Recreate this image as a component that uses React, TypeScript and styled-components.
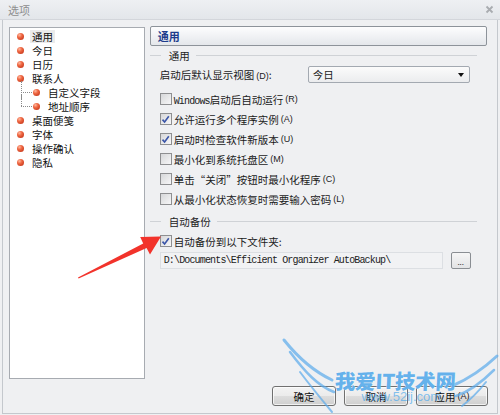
import React from 'react';
import styled, { createGlobalStyle } from 'styled-components';

const Global = createGlobalStyle`
  html, body { margin: 0; padding: 0; width: 500px; height: 415px; overflow: hidden; background: #eff0f2; }
  body { font-family: "Noto Sans CJK SC", "Liberation Sans", sans-serif; font-size: 10.5px; color: #1a1a1a; }
  * { box-sizing: border-box; }
`;

const Window = styled.div`
  position: relative;
  width: 500px;
  height: 415px;
  display: flex;
  flex-direction: column;
  background: #eff0f2;
  overflow: hidden;
`;

const TitleBar = styled.div`
  height: 20px;
  flex: none;
  display: flex;
  align-items: center;
  justify-content: space-between;
  padding: 0 6px 0 8px;
  background: linear-gradient(#eef0f3, #e3e6ea);
  border-bottom: 1px solid #d3d6db;
  color: #8e8e8e;
  font-size: 11px;
`;

const Frame = styled.div`
  flex: 1;
  display: flex;
  flex-direction: column;
  margin: 0 2px 1px 2px;
  border: 1px solid #c4c8cd;
  border-top: none;
  padding: 6px 10px 7px 6px;
`;

const Body = styled.div`
  flex: 1;
  display: flex;
  gap: 5px;
`;

const Tree = styled.div`
  width: 136px;
  margin-top: 1px;
  background: #fff;
  border: 1px solid #a7abb1;
  padding-top: 1px;
  display: flex;
  flex-direction: column;
`;

const TreeRow = styled.div<{ $sub?: boolean; $last?: boolean }>`
  position: relative;
  height: 14px;
  display: flex;
  align-items: center;
  padding-left: ${p => (p.$sub ? 23 : 7)}px;
  ${p =>
    p.$sub
      ? `&::before {
          content: '';
          position: absolute;
          left: 11px;
          top: -4px;
          width: 11px;
          height: ${p.$last ? 11 : 18}px;
          border-left: 1px dotted #8a8a8a;
        }
        &::after {
          content: '';
          position: absolute;
          left: 11px;
          top: 7px;
          width: 11px;
          border-top: 1px dotted #8a8a8a;
        }`
      : ''}
`;

const Bullet = styled.span`
  width: 7px;
  height: 7px;
  border-radius: 50%;
  flex: none;
  background: radial-gradient(circle at 35% 30%, #ffb9a0 0%, #f06a45 35%, #c93a1c 80%, #a42b12 100%);
  margin-right: 8px;
`;

const TreeText = styled.span<{ $selected?: boolean }>`
  line-height: 13px;
  padding: 0 2px;
  margin-left: -2px;
  background: ${p => (p.$selected ? '#ebebeb' : 'transparent')};
  color: #111;
`;

const Panel = styled.div`
  width: 338px;
  display: flex;
  flex-direction: column;
`;

const Header = styled.div`
  height: 20px;
  border: 1px solid #8d939a;
  border-radius: 2px;
  background: linear-gradient(#fdfdfe, #e4e7eb);
  display: flex;
  align-items: center;
  padding-left: 7px;
  font-weight: bold;
  color: #1d3c8c;
  font-size: 11px;
`;

const GroupLabel = styled.div<{ $top: number }>`
  margin-top: ${p => p.$top}px;
  height: 13px;
  display: flex;
  align-items: center;
  margin-right: 10px;
  color: #222;
  &::before {
    content: '';
    width: 11px;
    border-top: 1px solid #cfd2d6;
    margin-right: 8px;
  }
  &::after {
    content: '';
    flex: 1;
    border-top: 1px solid #cfd2d6;
    margin-left: 6px;
  }
`;

const Content = styled.div`
  padding-left: 10px;
  display: flex;
  flex-direction: column;
`;

const ComboRow = styled.div`
  margin-top: 4px;
  height: 17px;
  display: grid;
  grid-template-columns: 148px 162px;
  align-items: center;
`;

const Combo = styled.div`
  height: 17px;
  border: 1px solid #a3a9b1;
  border-radius: 2px;
  background: linear-gradient(#fbfbfb, #ebecee);
  display: flex;
  align-items: center;
  justify-content: space-between;
  padding: 0 5px 0 4px;
`;

const Caret = styled.span`
  width: 0;
  height: 0;
  border-left: 3.5px solid transparent;
  border-right: 3.5px solid transparent;
  border-top: 4px solid #111;
`;

const Key = styled.span`
  font-family: "Liberation Sans", sans-serif;
  font-size: 9px;
  margin-left: 2px;
  color: #222;
`;

const Mono = styled.span`
  font-family: "Liberation Mono", monospace;
  font-size: 10px;
  letter-spacing: -0.85px;
  color: #222;
`;

const CheckList = styled.div`
  margin-top: 6px;
  display: flex;
  flex-direction: column;
`;

const CheckRow = styled.div<{ $h?: number; $top?: number }>`
  height: ${p => p.$h ?? 20}px;
  margin-top: ${p => p.$top ?? 0}px;
  display: flex;
  align-items: center;
`;

const Box = styled.span`
  width: 12px;
  height: 12px;
  flex: none;
  border: 1px solid #8e8f91;
  background: linear-gradient(135deg, #d6d7d9, #f7f7f8);
  margin-right: 2px;
  display: flex;
  align-items: center;
  justify-content: center;
`;

const PathRow = styled.div`
  margin-top: 2px;
  height: 17px;
  display: flex;
  gap: 8px;
`;

const PathBox = styled.div`
  width: 283px;
  height: 17px;
  border: 1px solid #dcdfe3;
  background: #f1f2f4;
  display: flex;
  align-items: center;
  padding-left: 3px;
`;

const SmallButton = styled.div`
  width: 20px;
  height: 17px;
  border: 1px solid #8a8e93;
  border-radius: 2px;
  background: linear-gradient(#f6f6f6, #e2e3e5);
  display: flex;
  align-items: flex-end;
  justify-content: center;
  padding-bottom: 2px;
  font-size: 8px;
  line-height: 8px;
  color: #333;
`;

const Footer = styled.div`
  margin-top: 7px;
  height: 20px;
  display: flex;
  justify-content: flex-end;
  gap: 8px;
  margin-right: -1px;
`;

const Button = styled.div<{ $w: number }>`
  width: ${p => p.$w}px;
  height: 20px;
  border: 1px solid #707070;
  border-radius: 3px;
  background: linear-gradient(#f3f3f3 0%, #ebebeb 50%, #dddddd 51%, #cfcfcf 100%);
  box-shadow: inset 0 0 0 1px rgba(255, 255, 255, 0.7);
  display: flex;
  align-items: center;
  justify-content: center;
  color: #111;
`;

const Overlay = styled.svg`
  position: absolute;
  left: 0;
  top: 0;
  pointer-events: none;
`;

const Watermark = styled.div`
  position: absolute;
  left: 335px;
  top: 367px;
  display: flex;
  flex-direction: column;
  align-items: center;
  pointer-events: none;
`;

const WmTitle = styled.span`
  font-family: "Noto Sans CJK SC", sans-serif;
  font-weight: 900;
  font-size: 20.5px;
  line-height: 26px;
  color: rgba(74, 164, 232, 0.85);
  letter-spacing: -0.3px;
  transform: skewX(-3deg);
  text-shadow: 0 0 1px rgba(255, 255, 255, 0.9);
`;

const WmUrl = styled.span`
  font-family: "Liberation Sans", sans-serif;
  font-size: 13px;
  line-height: 14px;
  margin-top: -3px;
  margin-left: 12px;
  color: rgba(80, 170, 235, 0.7);
`;

const Check = () => (
  <svg width="9" height="9" viewBox="0 0 9 9">
    <path d="M1.5 4.6 L3.6 7 L7.8 1.2" fill="none" stroke="#3a55a8" strokeWidth="1.6" />
  </svg>
);

const treeItems: { t: string; sub?: boolean; last?: boolean; sel?: boolean }[] = [
  { t: '通用', sel: true },
  { t: '今日' },
  { t: '日历' },
  { t: '联系人' },
  { t: '自定义字段', sub: true },
  { t: '地址顺序', sub: true, last: true },
  { t: '桌面便笺' },
  { t: '字体' },
  { t: '操作确认' },
  { t: '隐私' },
];

const checks: { label: React.ReactNode; k: string; on: boolean }[] = [
  { label: <><Mono>Windows</Mono>启动后自动运行</>, k: '(R)', on: false },
  { label: '允许运行多个程序实例', k: '(A)', on: true },
  { label: '启动时检查软件新版本', k: '(U)', on: true },
  { label: '最小化到系统托盘区', k: '(M)', on: false },
  { label: '单击“关闭”按钮时最小化程序', k: '(C)', on: false },
  { label: '从最小化状态恢复时需要输入密码', k: '(L)', on: false },
];

export default function App() {
  return (
    <>
      <Global />
      <Window>
        <TitleBar>
          <span>选项</span>
          <svg width="9" height="9" viewBox="0 0 9 9">
            <path d="M1.5 1.5 L7.5 7.5 M7.5 1.5 L1.5 7.5" stroke="#a9acb0" strokeWidth="1.8" />
          </svg>
        </TitleBar>
        <Frame>
          <Body>
            <Tree>
              {treeItems.map(it => (
                <TreeRow key={it.t} $sub={it.sub} $last={it.last}>
                  <Bullet />
                  <TreeText $selected={it.sel}>{it.t}</TreeText>
                </TreeRow>
              ))}
            </Tree>
            <Panel>
              <Header>通用</Header>
              <GroupLabel $top={3}>通用</GroupLabel>
              <Content>
                <ComboRow>
                  <span>
                    启动后默认显示视图<Key>(D)</Key>:
                  </span>
                  <Combo>
                    <span>今日</span>
                    <Caret />
                  </Combo>
                </ComboRow>
                <CheckList>
                  {checks.map(c => (
                    <CheckRow key={c.k}>
                      <Box>{c.on && <Check />}</Box>
                      <span>{c.label}</span>
                      <Key>{c.k}</Key>
                    </CheckRow>
                  ))}
                </CheckList>
              </Content>
              <GroupLabel $top={6}>自动备份</GroupLabel>
              <Content>
                <CheckRow $h={18} $top={4}>
                  <Box>
                    <Check />
                  </Box>
                  <span>自动备份到以下文件夹:</span>
                </CheckRow>
                <PathRow>
                  <PathBox>
                    <Mono>D:\Documents\Efficient Organizer AutoBackup\</Mono>
                  </PathBox>
                  <SmallButton>...</SmallButton>
                </PathRow>
              </Content>
            </Panel>
          </Body>
          <Footer>
            <Button $w={64}>确定</Button>
            <Button $w={64}>取消</Button>
            <Button $w={72}>
              应用<Key>(A)</Key>
            </Button>
          </Footer>
        </Frame>
        <Overlay width="500" height="415" viewBox="0 0 500 415">
          <g fill="none" stroke="rgba(90,170,235,0.7)" strokeLinecap="round">
            <path d="M284 340 C300 360 315 372 332 380" strokeWidth="3" />
            <path d="M290 352 C305 372 318 386 334 392" strokeWidth="2.5" />
            <path d="M300 372 C312 388 322 400 332 412" strokeWidth="2" />
            <path d="M497 356 C480 372 466 380 452 386" strokeWidth="3" />
            <path d="M494 370 C480 384 468 392 456 396" strokeWidth="2.5" />
            <path d="M486 382 C478 392 470 400 462 406" strokeWidth="2" />
          </g>
          <polygon
            points="78,277.4 143.2,243.4 140.2,237 161,236.6 150,254.4 146.6,248 78.6,278.4"
            fill="#f2332b"
          />
        </Overlay>
        <Watermark>
          <WmTitle>我爱IT技术网</WmTitle>
          <WmUrl>www.52ij.com</WmUrl>
        </Watermark>
      </Window>
    </>
  );
}
